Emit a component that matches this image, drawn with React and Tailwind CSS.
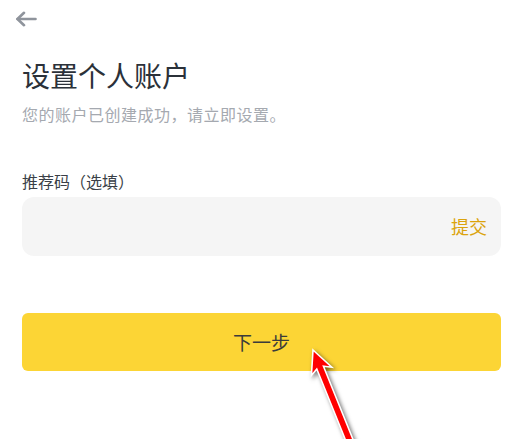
import React from 'react';

const font = { fontFamily: '"Noto Sans CJK SC", "Noto Sans", sans-serif' };

function BackArrow() {
  return (
    <svg width="22" height="16" viewBox="0 0 22 16" fill="none" stroke="#8f949c" strokeWidth="2.6" strokeLinecap="round" strokeLinejoin="round">
      <path d="M2.5 8H20.5" />
      <path d="M9 1.8L2.5 8L9 14.2" />
    </svg>
  );
}

function PointerArrow() {
  return (
    <svg
      className="absolute left-[290px] top-[340px] drop-shadow-[2px_2px_2px_rgba(0,0,0,0.55)]"
      width="90"
      height="110"
      viewBox="0 0 90 110"
    >
      <g transform="translate(23 10) rotate(-22)">
        <polygon
          points="0,0 11,23 3.6,19 3.6,130 -3.6,130 -3.6,19 -11,23"
          fill="#ff0000"
          stroke="#ffffff"
          strokeWidth="1.6"
          strokeLinejoin="miter"
        />
      </g>
    </svg>
  );
}

export default function App() {
  return (
    <div className="relative w-[517px] h-[439px] overflow-hidden bg-white" style={font}>
      <div className="h-[38px] flex items-center px-[15px]">
        <BackArrow />
      </div>
      <div className="pl-[22px] pr-[16px]">
        <h1 className="mt-[19px] text-[28px] leading-[36px] text-[#2b3139]">设置个人账户</h1>
        <p className="mt-[9px] text-[16px] leading-[24px] tracking-[0.5px] text-[#a5a9b0]">您的账户已创建成功，请立即设置。</p>
        <div className="mt-[43px] text-[16px] leading-[24px] text-[#3a3f47]">推荐码（选填）</div>
        <div className="mt-[4px] h-[59px] rounded-[12px] bg-[#f5f5f5] flex items-center justify-end pr-[14px]">
          <span className="text-[18px] text-[#dba30c]">提交</span>
        </div>
        <button className="mt-[57px] w-full h-[58px] rounded-[6px] bg-[#fcd535] flex items-center justify-center text-[19px] text-[#3b3b3b]">
          下一步
        </button>
      </div>
      <PointerArrow />
    </div>
  );
}
